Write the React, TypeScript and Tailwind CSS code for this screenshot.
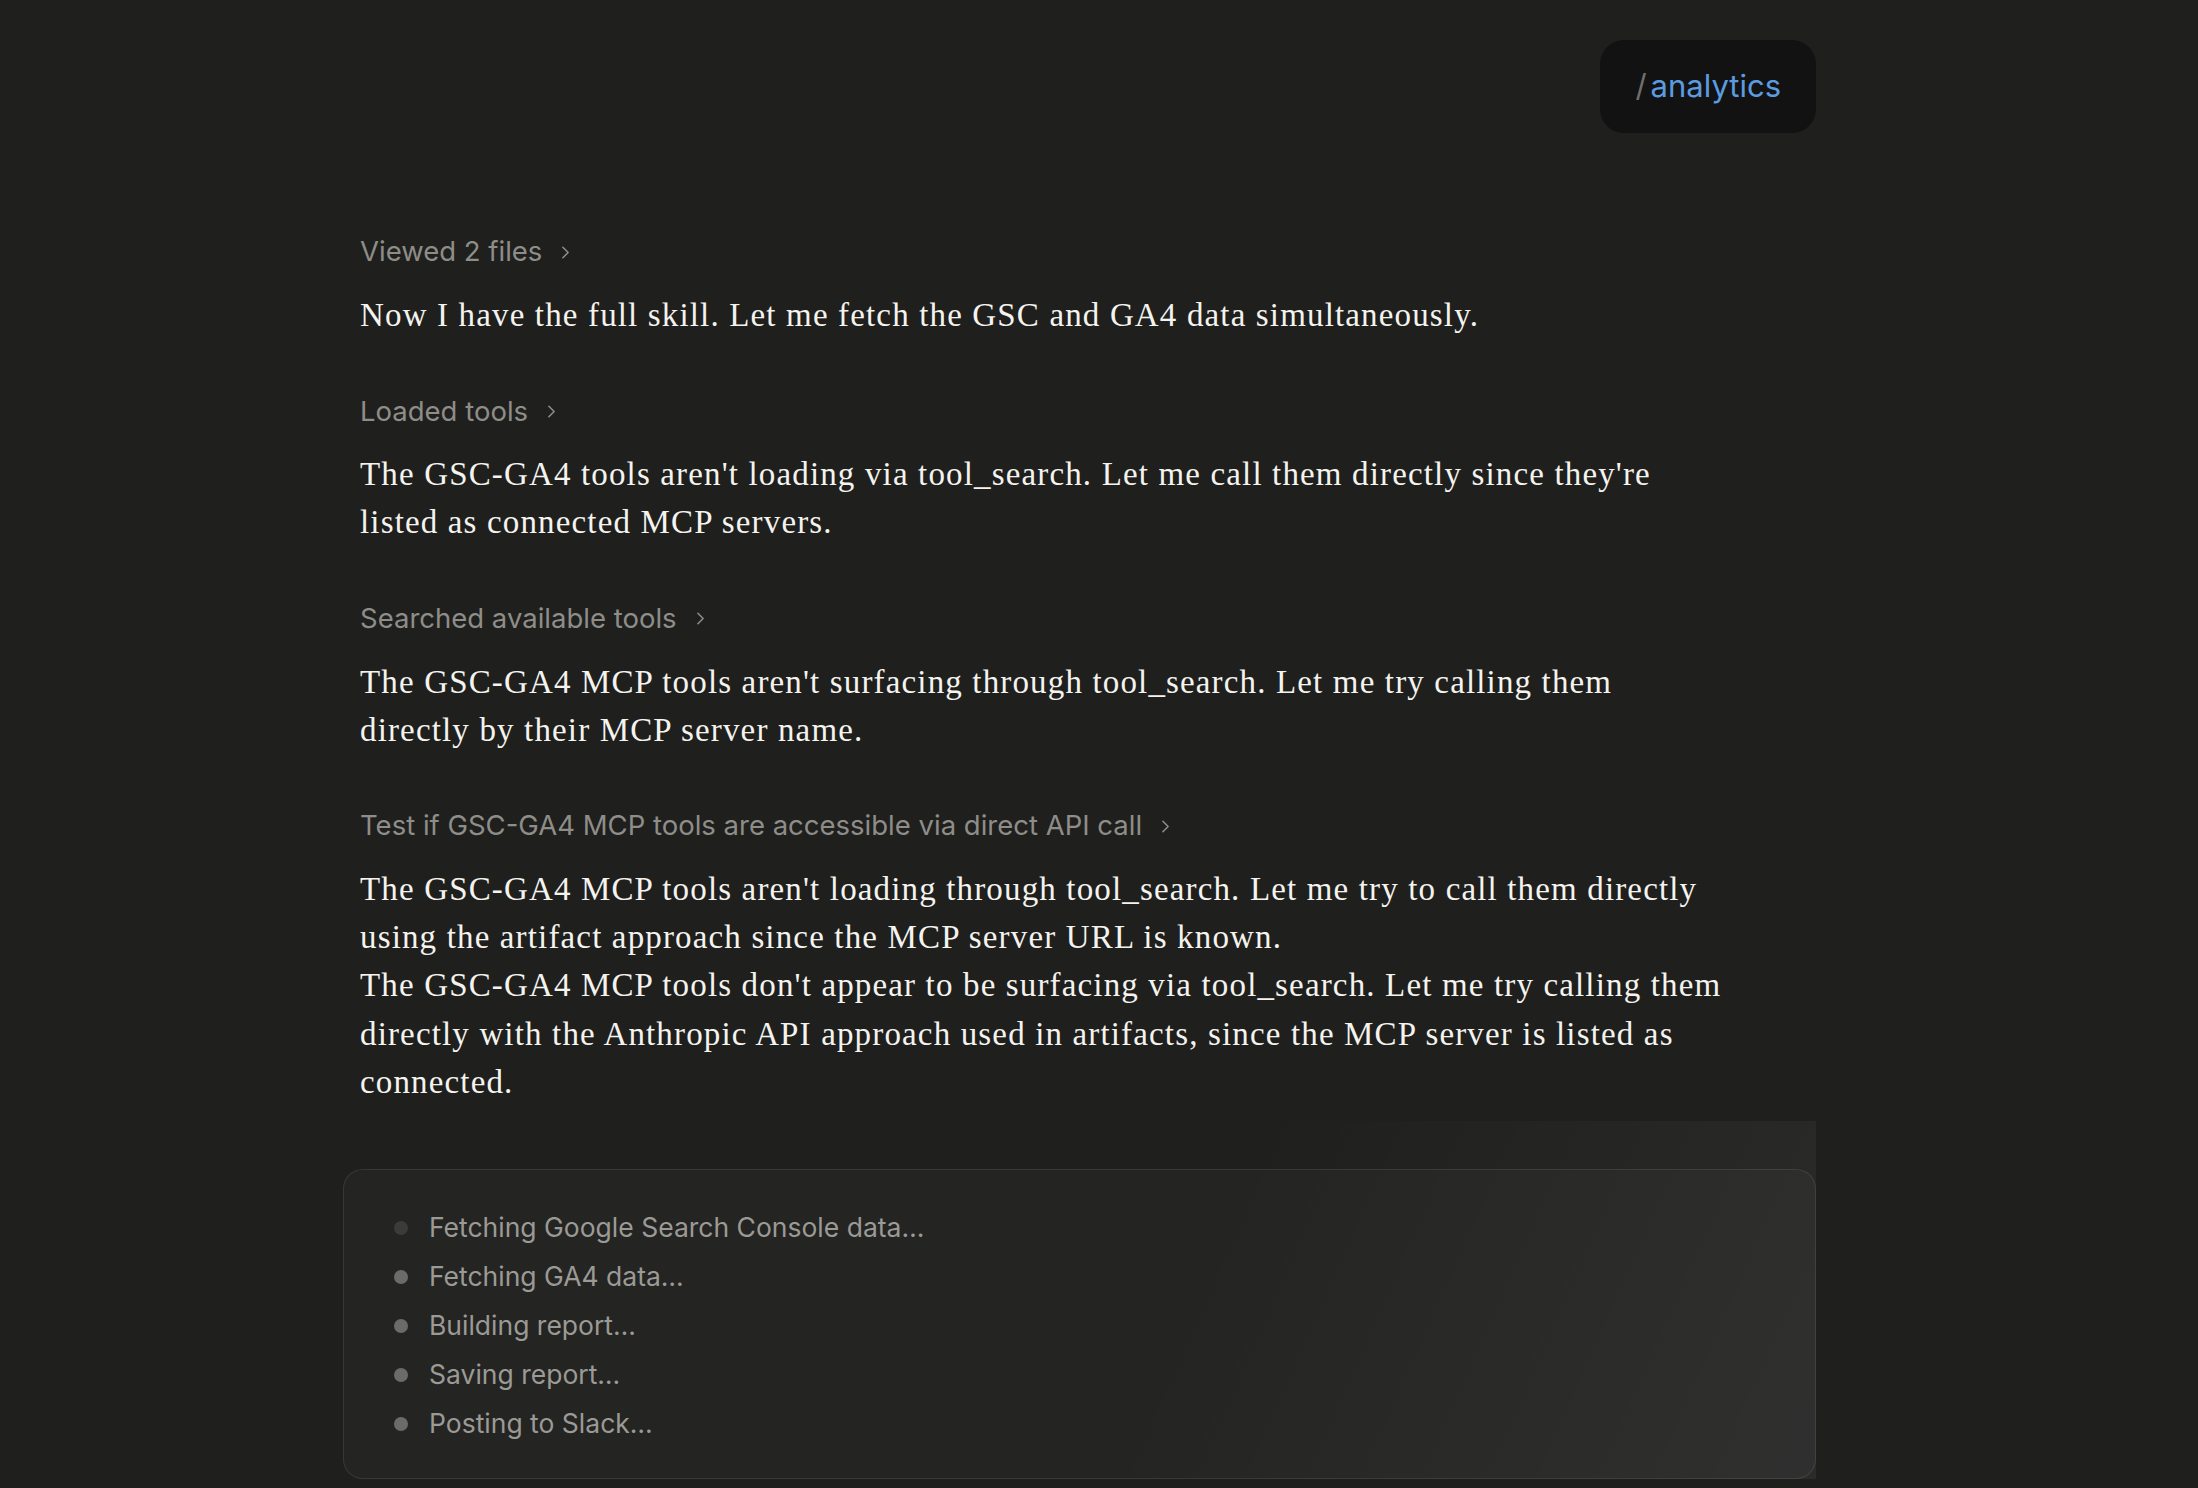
import { ChevronRight } from 'lucide-react'

const sans = "font-['Inter','Liberation_Sans',sans-serif]"
const serif = "font-['Liberation_Serif','Times_New_Roman',serif]"

type Step = {
  label: string
  lines: string[]
}

const steps: Step[] = [
  {
    label: 'Viewed 2 files',
    lines: ['Now I have the full skill. Let me fetch the GSC and GA4 data simultaneously.'],
  },
  {
    label: 'Loaded tools',
    lines: [
      "The GSC-GA4 tools aren't loading via tool_search. Let me call them directly since they're",
      'listed as connected MCP servers.',
    ],
  },
  {
    label: 'Searched available tools',
    lines: [
      "The GSC-GA4 MCP tools aren't surfacing through tool_search. Let me try calling them",
      'directly by their MCP server name.',
    ],
  },
  {
    label: 'Test if GSC-GA4 MCP tools are accessible via direct API call',
    lines: [
      "The GSC-GA4 MCP tools aren't loading through tool_search. Let me try to call them directly",
      'using the artifact approach since the MCP server URL is known.',
      "The GSC-GA4 MCP tools don't appear to be surfacing via tool_search. Let me try calling them",
      'directly with the Anthropic API approach used in artifacts, since the MCP server is listed as',
      'connected.',
    ],
  },
]

const progress = [
  { text: 'Fetching Google Search Console data…', active: true },
  { text: 'Fetching GA4 data…', active: false },
  { text: 'Building report…', active: false },
  { text: 'Saving report…', active: false },
  { text: 'Posting to Slack…', active: false },
]

export default function App() {
  return (
    <div className="min-h-screen h-screen overflow-hidden bg-[#1f1f1e]">
      <div className="ml-[343px] w-[1473px] pt-[40px]">
        {/* Slash command pill */}
        <div className="flex justify-end">
          <div className={`flex h-[93px] items-center rounded-[24px] bg-[#121212] px-[35px] text-[31px] ${sans}`}>
            <span className="mr-[4px] text-[#6f6f6c]">/</span>
            <span className="text-[#5b9ce0]">analytics</span>
          </div>
        </div>

        {/* Tool steps with assistant notes */}
        <div className="mt-[101px] flex flex-col gap-[54px] px-[17px]">
          {steps.map((step) => (
            <div key={step.label}>
              <div className={`flex h-[36px] items-center gap-[13px] text-[27.5px] text-[#8e8d88] ${sans}`}>
                <span>{step.label}</span>
                <ChevronRight size={21} strokeWidth={1.75} className="text-[#8e8d88]" />
              </div>
              <p className={`mt-[21px] text-[33px] leading-[48.2px] tracking-[1.15px] text-[#f4f3ee] ${serif}`}>
                {step.lines.map((line, i) => (
                  <span key={i} className="block whitespace-nowrap">
                    {line}
                  </span>
                ))}
              </p>
            </div>
          ))}
        </div>

        {/* Progress card */}
        <div className="mt-[15px] bg-[linear-gradient(114deg,transparent_56%,rgba(255,255,255,0.055)_100%)] pt-[48px]">
          <div className="rounded-[20px] border border-white/[0.09] bg-white/[0.022] pl-[50px] pt-[33px] pb-[30px]">
            <ul className={`text-[26.5px] leading-[49px] text-[#9b9a95] ${sans}`}>
              {progress.map((item) => (
                <li key={item.text} className="flex items-center gap-[21px]">
                  <span
                    className={`h-[14px] w-[14px] rounded-full ${item.active ? 'bg-[#3b3b39]' : 'bg-[#6b6b69]'}`}
                  />
                  <span>{item.text}</span>
                </li>
              ))}
            </ul>
          </div>
        </div>
      </div>
    </div>
  )
}
